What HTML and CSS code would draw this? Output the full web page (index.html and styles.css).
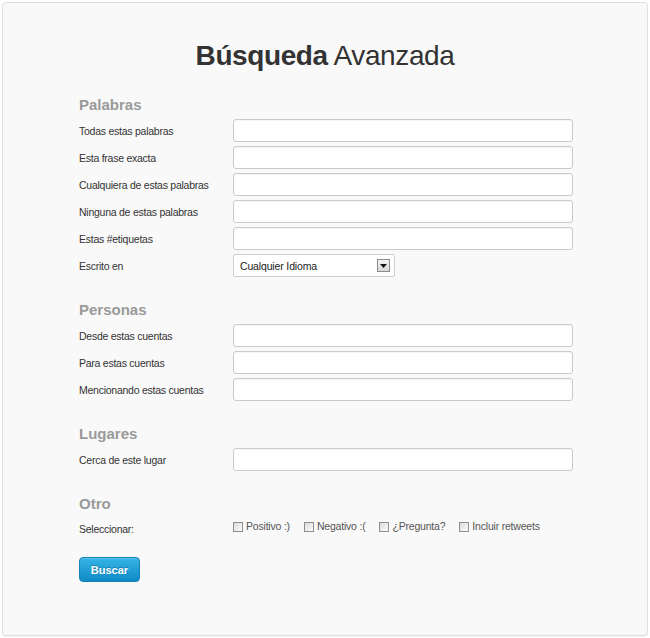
FILE: index.html
```html
<!DOCTYPE html>
<html lang="es">
<head>
<meta charset="utf-8">
<title>Búsqueda Avanzada</title>
<link rel="stylesheet" href="styles.css">
</head>
<body>
<div class="panel">
  <h1 class="title"><b>Búsqueda</b> Avanzada</h1>
  <form class="form">
    <section class="group">
      <h2 class="group-title">Palabras</h2>
      <div class="row"><label class="label">Todas estas palabras</label><input class="text" type="text"></div>
      <div class="row"><label class="label">Esta frase exacta</label><input class="text" type="text"></div>
      <div class="row"><label class="label">Cualquiera de estas palabras</label><input class="text" type="text"></div>
      <div class="row"><label class="label">Ninguna de estas palabras</label><input class="text" type="text"></div>
      <div class="row"><label class="label">Estas #etiquetas</label><input class="text" type="text"></div>
      <div class="row"><label class="label">Escrito en</label>
        <div class="select"><span class="select-value">Cualquier Idioma</span><span class="select-arrow"><svg width="7" height="4" viewBox="0 0 7 4"><path d="M0 0H7L3.5 4Z" fill="#111"/></svg></span></div>
      </div>
    </section>
    <section class="group">
      <h2 class="group-title">Personas</h2>
      <div class="row"><label class="label">Desde estas cuentas</label><input class="text" type="text"></div>
      <div class="row"><label class="label">Para estas cuentas</label><input class="text" type="text"></div>
      <div class="row"><label class="label">Mencionando estas cuentas</label><input class="text" type="text"></div>
    </section>
    <section class="group">
      <h2 class="group-title">Lugares</h2>
      <div class="row"><label class="label">Cerca de este lugar</label><input class="text" type="text"></div>
    </section>
    <section class="group">
      <h2 class="group-title">Otro</h2>
      <div class="row row-checks"><label class="label label-low">Seleccionar:</label>
        <div class="checks">
          <label class="check"><span class="box"></span>Positivo :)</label>
          <label class="check"><span class="box"></span>Negativo :(</label>
          <label class="check"><span class="box"></span>¿Pregunta?</label>
          <label class="check"><span class="box"></span>Incluir retweets</label>
        </div>
      </div>
    </section>
    <div class="actions"><button class="btn" type="button">Buscar</button></div>
  </form>
</div>
</body>
</html>
```
FILE: styles.css
```css
html, body {
  margin: 0;
  padding: 0;
  background: #ffffff;
}
body {
  font-family: "Liberation Sans", Arial, Helvetica, sans-serif;
  color: #333;
}
.panel {
  box-sizing: border-box;
  margin: 2px;
  width: 646px;
  height: 634px;
  border: 1px solid #dedede;
  border-radius: 4px;
  background: #f9f9f9;
  box-shadow: 0 1px 1px rgba(0,0,0,0.05);
  padding: 37px 0 0 76px;
}
.title {
  margin: 0 0 22px -76px;
  text-align: center;
  font-size: 28px;
  line-height: 32px;
  font-weight: normal;
  color: #333;
  letter-spacing: -0.4px;
}
.title b {
  font-weight: bold;
}
.form {
  display: flex;
  flex-direction: column;
  gap: 22px;
}
.group {
  display: flex;
  flex-direction: column;
  gap: 4px;
}
.group-title {
  margin: 0;
  font-size: 15px;
  line-height: 21px;
  font-weight: bold;
  color: #9a9a9a;
}
.row {
  display: flex;
  align-items: center;
  height: 23px;
}
.label {
  width: 154px;
  flex: none;
  font-size: 10.5px;
  color: #333;
  letter-spacing: -0.25px;
}
.text {
  box-sizing: border-box;
  width: 340px;
  height: 23px;
  margin: 0;
  padding: 0 6px;
  border: 1px solid #cacaca;
  border-radius: 3px;
  background: #fff;
  box-shadow: inset 0 1px 1px rgba(0,0,0,0.04);
  font: inherit;
}
.select {
  box-sizing: border-box;
  width: 162px;
  height: 23px;
  border: 1px solid #cfcfcf;
  border-radius: 2px;
  background: #fff;
  display: flex;
  align-items: center;
  justify-content: space-between;
  padding: 0 4px 0 6px;
}
.select-value {
  font-size: 10.5px;
  color: #222;
  letter-spacing: -0.15px;
}
.select-arrow {
  box-sizing: border-box;
  width: 13px;
  height: 13px;
  border: 1px solid #8c8c8c;
  background: linear-gradient(#f4f4f4, #d8d8d8);
  display: flex;
  align-items: center;
  justify-content: center;
}
.row-checks {
  align-items: flex-start;
}
.label-low {
  padding-top: 5px;
}
.checks {
  display: flex;
  gap: 14px;
  padding-top: 2px;
}
.check {
  display: flex;
  align-items: center;
  gap: 3px;
  font-size: 10.5px;
  color: #555;
  line-height: 13px;
  letter-spacing: -0.2px;
}
.box {
  box-sizing: border-box;
  width: 10px;
  height: 10px;
  border: 1px solid #8f8f8f;
  background: linear-gradient(135deg, #dcdcdc, #fbfbfb);
}
.actions {
  margin-top: -6px;
}
.btn {
  box-sizing: border-box;
  width: 61px;
  height: 25px;
  padding: 0;
  border: 1px solid #1481b8;
  border-radius: 4px;
  background: linear-gradient(#35b4e6, #0f8ac6);
  color: #fff;
  font-family: "Liberation Sans", Arial, sans-serif;
  font-size: 11px;
  font-weight: bold;
  text-shadow: 0 -1px 0 rgba(0,0,0,0.25);
  box-shadow: inset 0 1px 0 rgba(255,255,255,0.2);
}
```
